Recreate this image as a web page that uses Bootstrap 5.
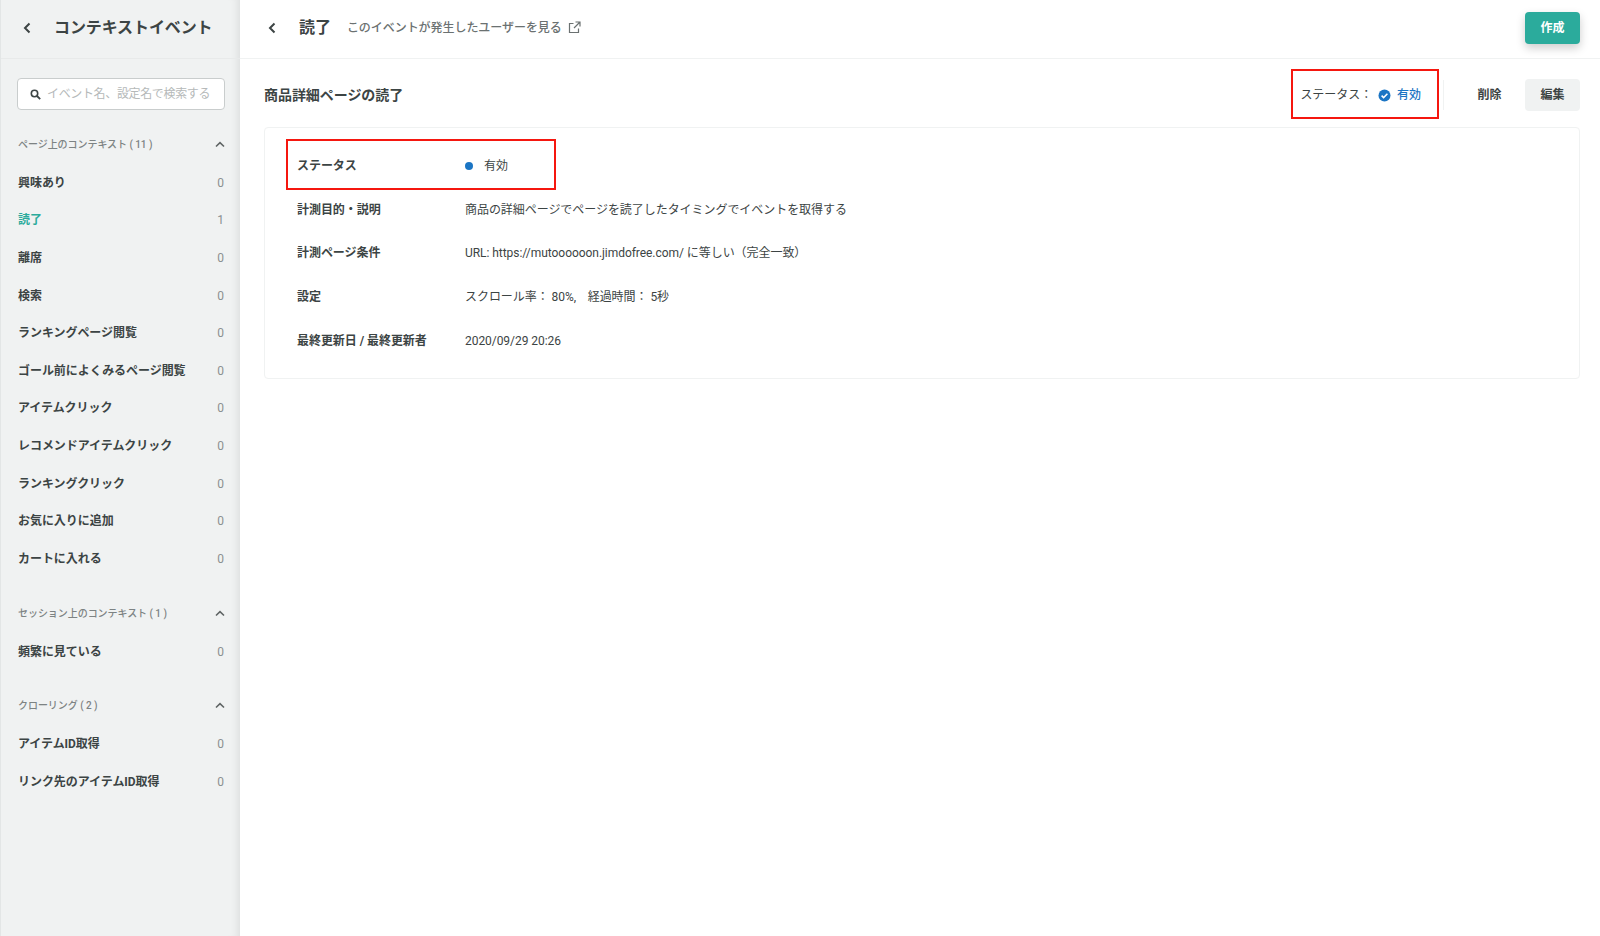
<!DOCTYPE html>
<html lang="ja">
<head>
<meta charset="utf-8">
<title>読了</title>
<link href="https://cdn.jsdelivr.net/npm/bootstrap@5.3.0/dist/css/bootstrap.min.css" rel="stylesheet">
<style>
html,body{height:100%}
body{font-family:Roboto,"Noto Sans CJK JP",sans-serif;font-size:12px;letter-spacing:-.05px;color:#3c4444;background:#fff;overflow:hidden}
.app-shell{height:936px}
.side-pane{width:240px;flex:none;background:#f0f2f2;border-left:1px solid #e3e6e6;box-shadow:inset -9px 0 8px -7px rgba(0,0,0,.09)}
.side-head{height:59px;border-bottom:1px solid #e8eaea;padding:0 0 3px 21px;gap:22px}
.side-head h1{font-size:16px;font-weight:700;margin:0;letter-spacing:-.1px;color:#3c4444}
.search-wrap{margin:19px 15px 0 16px;height:32px;background:#fff;border:1px solid #c9cdcd;border-radius:4px;padding-left:12px;gap:6px}
.search-wrap input{border:0;outline:0;padding:0;background:transparent;font-size:12px;width:165px;font-family:inherit;letter-spacing:-.35px}
.search-wrap input::placeholder{color:#b5b9b9}
.sec-head{height:20px;padding:0 15px 0 17px;color:#7d8383;font-size:10px;font-weight:500}
.sec-one{margin-top:24px}
.sec-two{margin-top:26px}
.sec-three{margin-top:24px}
.ev-list{margin-top:10px}
.ev-row{height:37.6px;padding:0 16px 0 17px;font-weight:700;color:#3c4444}
.ev-row .cnt{font-weight:400;color:#8b9090}
.ev-row.on .ev-name{color:#2bab9c}
.main-pane{min-width:0}
.top-bar{height:59px;border-bottom:1px solid #f0f2f2;padding:0 20px 3px 27px}
.top-bar h2{font-size:16px;font-weight:700;margin:0 0 0 22px;color:#3c4444}
.ext-link{margin-left:16px;color:#6b7171;font-weight:500;gap:6px}
.btn-make{width:55px;height:32px;padding:0;background:#2bab9c;border:0;color:#fff;font-size:12px;font-weight:700;border-radius:4px;box-shadow:0 4px 10px rgba(0,0,0,.2)}
.btn-make:hover{background:#2bab9c;color:#fff}
.tool-row{padding:4px 20px 0 24px;height:68px}
.tool-row h3{font-size:14px;font-weight:700;margin:0;color:#3c4444}
.state-zone{position:relative;padding-right:22px}
.state-txt{color:#3c4444;margin-right:6px}
.state-val{color:#1b75c4;font-weight:500;margin-left:6px}
.tool-sep{width:1px;height:30px;background:#f0f2f2;margin-right:18px}
.btn-soft{width:55px;height:32px;padding:0;font-size:12px;font-weight:700;border:0;border-radius:4px;color:#3c4444;background:transparent}
.btn-soft.filled{background:#f0f2f2;margin-left:8px}
.info-box{margin:0 20px 0 24px;height:252px;border:1px solid #f0f2f2;border-radius:4px;padding:16px 32px}
.info-row{height:43.75px;position:relative}
.info-key{width:168px;flex:none;font-weight:700}
.dot-mark{width:8px;height:8px;border-radius:50%;background:#1b75c4;margin-right:11px}
.mark-frame{position:absolute;border:2px solid #f5170f;pointer-events:none}
.frame-a{left:-11px;top:-5px;width:270px;height:51px}
.frame-b{left:-9px;top:-17px;width:148px;height:50px}
</style>
</head>
<body>
<div class="app-shell d-flex">
  <aside class="side-pane">
    <div class="side-head d-flex align-items-center">
      <svg width="10" height="12" viewBox="0 0 10 12"><path d="M7.5 1.5 3 6l4.5 4.5" fill="none" stroke="#3c4444" stroke-width="2"/></svg>
      <h1>コンテキストイベント</h1>
    </div>
    <div class="search-wrap d-flex align-items-center">
      <svg width="11" height="11" viewBox="0 0 11 11"><circle cx="4.5" cy="4.5" r="3.2" fill="none" stroke="#3c4444" stroke-width="1.6"/><path d="m7 7 3.2 3.2" stroke="#3c4444" stroke-width="1.8"/></svg>
      <input type="text" placeholder="イベント名、設定名で検索する">
    </div>
    <div class="sec-head sec-one d-flex justify-content-between align-items-center">
      <span>ページ上のコンテキスト ( 11 )</span>
      <svg width="10" height="7" viewBox="0 0 10 7"><path d="M1 5.5 5 1.7l4 3.8" fill="none" stroke="#5f6565" stroke-width="1.6"/></svg>
    </div>
    <div class="ev-list">
      <div class="ev-row d-flex justify-content-between align-items-center"><span class="ev-name">興味あり</span><span class="cnt">0</span></div>
      <div class="ev-row on d-flex justify-content-between align-items-center"><span class="ev-name">読了</span><span class="cnt">1</span></div>
      <div class="ev-row d-flex justify-content-between align-items-center"><span class="ev-name">離席</span><span class="cnt">0</span></div>
      <div class="ev-row d-flex justify-content-between align-items-center"><span class="ev-name">検索</span><span class="cnt">0</span></div>
      <div class="ev-row d-flex justify-content-between align-items-center"><span class="ev-name">ランキングページ閲覧</span><span class="cnt">0</span></div>
      <div class="ev-row d-flex justify-content-between align-items-center"><span class="ev-name">ゴール前によくみるページ閲覧</span><span class="cnt">0</span></div>
      <div class="ev-row d-flex justify-content-between align-items-center"><span class="ev-name">アイテムクリック</span><span class="cnt">0</span></div>
      <div class="ev-row d-flex justify-content-between align-items-center"><span class="ev-name">レコメンドアイテムクリック</span><span class="cnt">0</span></div>
      <div class="ev-row d-flex justify-content-between align-items-center"><span class="ev-name">ランキングクリック</span><span class="cnt">0</span></div>
      <div class="ev-row d-flex justify-content-between align-items-center"><span class="ev-name">お気に入りに追加</span><span class="cnt">0</span></div>
      <div class="ev-row d-flex justify-content-between align-items-center"><span class="ev-name">カートに入れる</span><span class="cnt">0</span></div>
    </div>
    <div class="sec-head sec-two d-flex justify-content-between align-items-center">
      <span>セッション上のコンテキスト ( 1 )</span>
      <svg width="10" height="7" viewBox="0 0 10 7"><path d="M1 5.5 5 1.7l4 3.8" fill="none" stroke="#5f6565" stroke-width="1.6"/></svg>
    </div>
    <div class="ev-list">
      <div class="ev-row d-flex justify-content-between align-items-center"><span class="ev-name">頻繁に見ている</span><span class="cnt">0</span></div>
    </div>
    <div class="sec-head sec-three d-flex justify-content-between align-items-center">
      <span>クローリング ( 2 )</span>
      <svg width="10" height="7" viewBox="0 0 10 7"><path d="M1 5.5 5 1.7l4 3.8" fill="none" stroke="#5f6565" stroke-width="1.6"/></svg>
    </div>
    <div class="ev-list">
      <div class="ev-row d-flex justify-content-between align-items-center"><span class="ev-name">アイテムID取得</span><span class="cnt">0</span></div>
      <div class="ev-row d-flex justify-content-between align-items-center"><span class="ev-name">リンク先のアイテムID取得</span><span class="cnt">0</span></div>
    </div>
  </aside>
  <main class="main-pane flex-grow-1">
    <div class="top-bar d-flex align-items-center">
      <svg width="10" height="12" viewBox="0 0 10 12"><path d="M7.5 1.5 3 6l4.5 4.5" fill="none" stroke="#3c4444" stroke-width="2"/></svg>
      <h2>読了</h2>
      <span class="ext-link d-inline-flex align-items-center">このイベントが発生したユーザーを見る
        <svg width="13" height="13" viewBox="0 0 13 13" fill="none" stroke="#6b7171" stroke-width="1.2"><path d="M10.5 7.5v4h-9v-9h4"/><path d="M7.5 1h4.5v4.5M12 1 6 7"/></svg>
      </span>
      <button type="button" class="btn btn-make ms-auto">作成</button>
    </div>
    <div class="tool-row d-flex align-items-center">
      <h3>商品詳細ページの読了</h3>
      <div class="state-zone d-flex align-items-center ms-auto">
        <span class="state-txt">ステータス：</span>
        <svg width="13" height="13" viewBox="0 0 13 13"><circle cx="6.5" cy="6.5" r="6" fill="#1b75c4"/><path d="m3.6 6.6 2 2 3.8-3.8" fill="none" stroke="#fff" stroke-width="1.5"/></svg>
        <span class="state-val">有効</span>
        <span class="mark-frame frame-b"></span>
      </div>
      <span class="tool-sep"></span>
      <button type="button" class="btn btn-soft">削除</button>
      <button type="button" class="btn btn-soft filled">編集</button>
    </div>
    <div class="info-box">
      <div class="info-row d-flex align-items-center">
        <span class="info-key">ステータス</span>
        <span class="d-inline-flex align-items-center"><span class="dot-mark"></span>有効</span>
        <span class="mark-frame frame-a"></span>
      </div>
      <div class="info-row d-flex align-items-center"><span class="info-key">計測目的・説明</span><span>商品の詳細ページでページを読了したタイミングでイベントを取得する</span></div>
      <div class="info-row d-flex align-items-center"><span class="info-key">計測ページ条件</span><span>URL: https://mutoooooon.jimdofree.com/ に等しい（完全一致）</span></div>
      <div class="info-row d-flex align-items-center"><span class="info-key">設定</span><span>スクロール率： 80%,&nbsp;&nbsp;&nbsp; 経過時間： 5秒</span></div>
      <div class="info-row d-flex align-items-center"><span class="info-key">最終更新日 / 最終更新者</span><span>2020/09/29 20:26</span></div>
    </div>
  </main>
</div>
<script src="https://cdn.jsdelivr.net/npm/bootstrap@5.3.0/dist/js/bootstrap.bundle.min.js"></script>
</body>
</html>
